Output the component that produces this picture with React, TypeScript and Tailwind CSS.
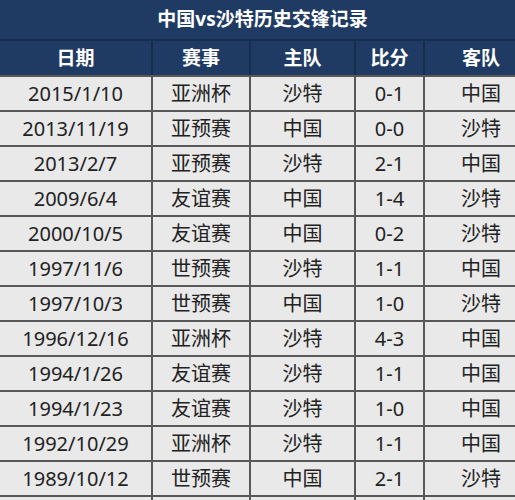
import React from "react";

const rows: string[][] = [
  ["2015/1/10", "亚洲杯", "沙特", "0-1", "中国"],
  ["2013/11/19", "亚预赛", "中国", "0-0", "沙特"],
  ["2013/2/7", "亚预赛", "沙特", "2-1", "中国"],
  ["2009/6/4", "友谊赛", "中国", "1-4", "沙特"],
  ["2000/10/5", "友谊赛", "中国", "0-2", "沙特"],
  ["1997/11/6", "世预赛", "沙特", "1-1", "中国"],
  ["1997/10/3", "世预赛", "中国", "1-0", "沙特"],
  ["1996/12/16", "亚洲杯", "沙特", "4-3", "中国"],
  ["1994/1/26", "友谊赛", "沙特", "1-1", "中国"],
  ["1994/1/23", "友谊赛", "沙特", "1-0", "中国"],
  ["1992/10/29", "亚洲杯", "沙特", "1-1", "中国"],
  ["1989/10/12", "世预赛", "中国", "2-1", "沙特"],
  ["", "", "", "", ""],
];

const headers = ["日期", "赛事", "主队", "比分", "客队"];

export default function App() {
  return (
    <div
      className="w-[515px] h-[500px] overflow-hidden bg-[#e9e9e9]"
      style={{ fontFamily: '"Noto Sans", "Noto Sans CJK SC", sans-serif' }}
    >
      <div className="w-[537px]">
        <div className="h-[39px] bg-[#1f3b63] flex items-center justify-center pr-[12px] text-white font-bold text-[19px] leading-none">
          中国vs沙特历史交锋记录
        </div>
        <div className="grid grid-cols-[153px_98px_105px_69px_112px] h-[36px] bg-[#1f3b63] border-t-2 border-[#172d4d]">
          {headers.map((h, i) => (
            <div
              key={h}
              className={`flex items-center justify-center text-white font-bold text-[19px] leading-none ${
                i < 4 ? "border-r-2 border-[#172d4d]" : ""
              }`}
            >
              {h}
            </div>
          ))}
        </div>
        {rows.map((r, ri) => (
          <div
            key={ri}
            className="grid grid-cols-[153px_98px_105px_69px_112px] h-[35px] border-t-2 border-[#585858] bg-[#e9e9e9]"
          >
            {r.map((c, ci) => (
              <div
                key={ci}
                className={`flex items-center justify-center text-[#222222] text-[20px] leading-none ${
                  ci < 4 ? "border-r-2 border-[#585858]" : ""
                }`}
              >
                {c}
              </div>
            ))}
          </div>
        ))}
      </div>
    </div>
  );
}
